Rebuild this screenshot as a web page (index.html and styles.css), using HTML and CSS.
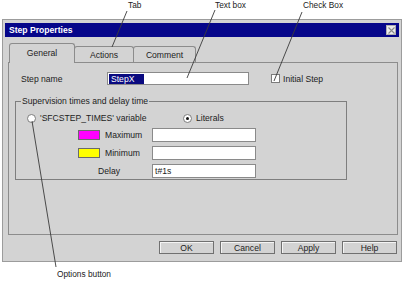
FILE: index.html
```html
<!DOCTYPE html>
<html lang="en">
<head>
    <meta charset="UTF-8">
    <title>Step Properties</title>
    <link rel="stylesheet" href="styles.css">
</head>
<body>
    <div class="page">
        <div class="callouts">
            <span class="callout callout-tab">Tab</span>
            <span class="callout callout-text">Text box</span>
            <span class="callout">Check Box</span>
        </div>

        <div class="dialog">
            <div class="titlebar">
                <span class="title">Step Properties</span>
                <span class="close">
                    <svg width="7" height="7" viewBox="0 0 7 7"><path d="M0.5 0.5L6.5 6.5M6.5 0.5L0.5 6.5" stroke="#8a8a8a" stroke-width="1.1"/></svg>
                </span>
            </div>

            <div class="tabs">
                <div class="tab tab-general active">General</div>
                <div class="tab tab-actions">Actions</div>
                <div class="tab tab-comment">Comment</div>
            </div>

            <div class="panel">
                <div class="name-row">
                    <span class="name-label">Step name</span>
                    <div class="textbox name-box"><span class="selected">StepX</span></div>
                    <span class="checkbox"></span>
                    <span class="check-label">Initial Step</span>
                </div>

                <fieldset class="group">
                    <legend>Supervision times and delay time</legend>
                    <div class="radio-row">
                        <div class="radio-item radio-var">
                            <span class="radio"></span>
                            <span>'SFCSTEP_TIMES' variable</span>
                        </div>
                        <div class="radio-item">
                            <span class="radio checked"></span>
                            <span>Literals</span>
                        </div>
                    </div>
                    <div class="field-row">
                        <div class="lead"><span class="swatch swatch-max"></span><span>Maximum</span></div>
                        <div class="textbox field-box"></div>
                    </div>
                    <div class="field-row">
                        <div class="lead"><span class="swatch swatch-min"></span><span>Minimum</span></div>
                        <div class="textbox field-box"></div>
                    </div>
                    <div class="field-row">
                        <div class="lead lead-delay"><span>Delay</span></div>
                        <div class="textbox field-box">t#1s</div>
                    </div>
                </fieldset>
            </div>

            <div class="buttons">
                <div class="button">OK</div>
                <div class="button">Cancel</div>
                <div class="button">Apply</div>
                <div class="button">Help</div>
            </div>
        </div>

        <div class="callouts-bottom">
            <span class="callout">Options button</span>
        </div>

        <svg class="leaders" width="406" height="285" viewBox="0 0 406 285">
            <line x1="127" y1="11" x2="112" y2="47"/>
            <line x1="215" y1="10" x2="187" y2="78"/>
            <line x1="302" y1="12" x2="274" y2="81"/>
            <line x1="32" y1="121" x2="56" y2="267"/>
        </svg>
    </div>
</body>
</html>
```

FILE: styles.css
```css
body {
    margin: 0;
    padding: 0;
    background-color: #fff;
    font-family: "Liberation Sans", Arial, sans-serif;
    font-size: 8.6px;
    color: #1c1c1c;
}
.page {
    position: relative;
    width: 406px;
    height: 285px;
    overflow: hidden;
}
.callouts {
    display: flex;
    height: 19px;
    padding-left: 128px;
    line-height: 11px;
}
.callout {
    font-size: 8.3px;
    color: #222;
    white-space: nowrap;
}
.callout-tab {
    width: 87px;
}
.callout-text {
    width: 88px;
}
.dialog {
    margin-left: 2px;
    width: 400px;
    height: 243px;
    box-sizing: border-box;
    border: 1px solid #9c9c9c;
    padding: 3px 2px 0 2px;
    background-color: #d3d3d3;
}
.titlebar {
    display: flex;
    align-items: center;
    justify-content: space-between;
    height: 14px;
    background-color: #06068a;
    padding: 0 3px 0 4px;
}
.title {
    color: #fff;
    font-weight: bold;
    font-size: 8.6px;
}
.close {
    display: flex;
    align-items: center;
    justify-content: center;
    width: 9px;
    height: 9px;
    background-color: #ececec;
    border: 1px solid #b0b0b0;
    box-sizing: border-box;
    width: 10px;
    height: 10px;
}
.tabs {
    display: flex;
    align-items: flex-end;
    height: 19px;
    margin-top: 6px;
    padding-left: 4px;
}
.tab {
    display: flex;
    align-items: center;
    justify-content: center;
    height: 16px;
    box-sizing: border-box;
    border: 1px solid #8c8c8c;
    border-bottom: none;
    border-radius: 3px 3px 0 0;
    background-color: #d3d3d3;
}
.tab.active {
    height: 20px;
    margin-bottom: -1px;
    padding-bottom: 2px;
    position: relative;
}
.tab-general {
    width: 66px;
}
.tab-actions {
    width: 60px;
    margin-left: -1px;
}
.tab-comment {
    width: 63px;
    margin-left: -1px;
}
.panel {
    margin: 0 1px 0 3px;
    height: 173px;
    box-sizing: border-box;
    border: 1px solid #8c8c8c;
    padding: 9px 6px 0 6px;
}
.name-row {
    display: flex;
    align-items: center;
    height: 13px;
    padding-left: 6px;
}
.name-label {
    width: 86px;
}
.textbox {
    display: flex;
    align-items: center;
    box-sizing: border-box;
    border: 1px solid #8a8a8a;
    background-color: #fff;
    padding-left: 2px;
}
.name-box {
    width: 142px;
    height: 13px;
    padding-left: 1px;
}
.selected {
    width: 35px;
    height: 10px;
    line-height: 10px;
    padding-left: 2px;
    box-sizing: border-box;
    background-color: #0a0a80;
    color: #fff;
}
.checkbox {
    width: 9px;
    height: 9px;
    margin-left: 22px;
    box-sizing: border-box;
    border: 1px solid #7c7c7c;
    background-color: #fff;
}
.check-label {
    margin-left: 3px;
}
.group {
    width: 332px;
    margin: 11px 0 0 0;
    padding: 5px 0 1px 11px;
    box-sizing: border-box;
    border: 1px solid #7e7e7e;
    min-width: 0;
}
.group legend {
    margin-left: -6px;
    padding: 0 1px;
    line-height: 11px;
}
.radio-row {
    display: flex;
    align-items: center;
    height: 12px;
}
.radio-item {
    display: flex;
    align-items: center;
    gap: 4px;
}
.radio-var {
    width: 156px;
}
.radio {
    display: flex;
    align-items: center;
    justify-content: center;
    width: 9px;
    height: 9px;
    box-sizing: border-box;
    border: 1px solid #7c7c7c;
    border-radius: 50%;
    background-color: #fff;
}
.radio.checked::after {
    content: "";
    width: 3px;
    height: 3px;
    border-radius: 50%;
    background-color: #111;
}
.field-row {
    display: flex;
    align-items: center;
    height: 14px;
    margin-top: 4px;
    padding-left: 51px;
}
.lead {
    display: flex;
    align-items: center;
    gap: 5px;
    width: 74px;
}
.lead-delay {
    padding-left: 20px;
    box-sizing: border-box;
}
.swatch {
    width: 22px;
    height: 10px;
    box-sizing: border-box;
    border: 1px solid #6a6a6a;
}
.swatch-max {
    background-color: #ff00ff;
}
.swatch-min {
    background-color: #ffff00;
}
.field-box {
    width: 104px;
    height: 14px;
}
.buttons {
    display: flex;
    justify-content: flex-end;
    gap: 6px;
    margin-top: 6px;
    padding-right: 2px;
}
.button {
    display: flex;
    align-items: center;
    justify-content: center;
    width: 55px;
    height: 13px;
    box-sizing: border-box;
    border: 1px solid #707070;
    box-shadow: inset 1px 1px 0 #f4f4f4;
}
.callouts-bottom {
    margin-top: 7px;
    padding-left: 57px;
    line-height: 11px;
}
.leaders {
    position: absolute;
    left: 0;
    top: 0;
    pointer-events: none;
}
.leaders line {
    stroke: #3a3a3a;
    stroke-width: 0.9;
}
```
